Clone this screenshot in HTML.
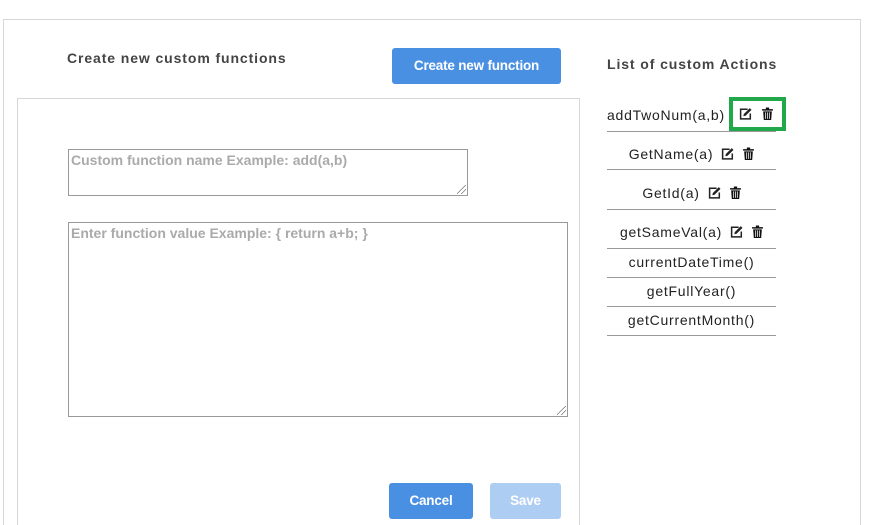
<!DOCTYPE html>
<html><head><meta charset="utf-8"><style>
*{box-sizing:border-box;margin:0;padding:0}
html,body{width:875px;height:525px;overflow:hidden}
body{background:#fff;position:relative;font-family:"Liberation Sans",Arial,sans-serif}
.a{position:absolute}
.h{font-size:14px;font-weight:bold;color:#444;letter-spacing:0.9px}
.btn{background:#4a90e2;color:#fff;font-weight:bold;font-size:13.5px;border-radius:3px;text-align:center;letter-spacing:-0.2px}
.ta{border:1px solid #999;color:#aaa;font-weight:bold;font-size:14px;padding:2px 2px}
.row{position:absolute;left:607px;width:169px;border-bottom:1px solid #999;font-size:14px;color:#222;letter-spacing:0.75px;text-align:center;white-space:nowrap}
.ic{display:inline-block;vertical-align:middle;margin-left:8px;position:relative;top:-2px}
.grip{position:absolute;right:1px;bottom:1px;width:9px;height:9px;background:linear-gradient(135deg,transparent 45%,#777 45%,#777 52%,transparent 52%,transparent 70%,#777 70%,#777 77%,transparent 77%)}
</style></head><body>
<div class="a" style="left:3px;top:19px;width:858px;height:506px;border:1px solid #d6d6d6;border-bottom:none"></div>
<div class="a" style="left:17px;top:98px;width:563px;height:427px;border:1px solid #d6d6d6;border-bottom:none"></div>
<div class="a h" style="left:67px;top:50px">Create new custom functions</div>
<div class="a btn" style="left:392px;top:48px;width:169px;height:36px;line-height:36px">Create new function</div>
<div class="a ta" style="left:68px;top:149px;width:400px;height:47px">Custom function name Example: add(a,b)<span class="grip"></span></div>
<div class="a ta" style="left:68px;top:222px;width:500px;height:195px">Enter function value Example: { return a+b; }<span class="grip"></span></div>
<div class="a btn" style="left:389px;top:483px;width:84px;height:36px;line-height:36px">Cancel</div>
<div class="a btn" style="left:490px;top:483px;width:71px;height:36px;line-height:36px;background:#aecdf3">Save</div>
<div class="a h" style="left:607px;top:56px">List of custom Actions</div>

<div class="row" style="top:103px;height:29px;text-align:left;line-height:24px">addTwoNum(a,b)</div>
<div class="a" style="left:729px;top:97px;width:57px;height:34px;border:4px solid #22a84a;background:#fff"></div>
<div class="row" style="top:143px;height:27px;line-height:22px">GetName(a)<svg class="ic" width="14" height="13" viewBox="0 0 13 12"><path d="M8 2H1.5v9h9V6" fill="none" stroke="#222" stroke-width="1.4"/><path d="M4 8.5l.5-2L10 1l1.6 1.6-5.5 5.5z" fill="#222"/></svg><svg class="ic" width="11" height="13" viewBox="0 0 10 12"><path d="M0 2h10v1.3H0zM3.5 0.5h3v1.5h-3zM1 4h8l-.6 8H1.6z" fill="#111"/><path d="M3.3 5v6M5 5v6M6.7 5v6" stroke="#fff" stroke-width=".7"/></svg></div>
<div class="row" style="top:182px;height:28px;line-height:22px">GetId(a)<svg class="ic" width="14" height="13" viewBox="0 0 13 12"><path d="M8 2H1.5v9h9V6" fill="none" stroke="#222" stroke-width="1.4"/><path d="M4 8.5l.5-2L10 1l1.6 1.6-5.5 5.5z" fill="#222"/></svg><svg class="ic" width="11" height="13" viewBox="0 0 10 12"><path d="M0 2h10v1.3H0zM3.5 0.5h3v1.5h-3zM1 4h8l-.6 8H1.6z" fill="#111"/><path d="M3.3 5v6M5 5v6M6.7 5v6" stroke="#fff" stroke-width=".7"/></svg></div>
<div class="row" style="top:221px;height:28px;line-height:22px">getSameVal(a)<svg class="ic" width="14" height="13" viewBox="0 0 13 12"><path d="M8 2H1.5v9h9V6" fill="none" stroke="#222" stroke-width="1.4"/><path d="M4 8.5l.5-2L10 1l1.6 1.6-5.5 5.5z" fill="#222"/></svg><svg class="ic" width="11" height="13" viewBox="0 0 10 12"><path d="M0 2h10v1.3H0zM3.5 0.5h3v1.5h-3zM1 4h8l-.6 8H1.6z" fill="#111"/><path d="M3.3 5v6M5 5v6M6.7 5v6" stroke="#fff" stroke-width=".7"/></svg></div>
<div class="row" style="top:249px;height:29px;line-height:26px">currentDateTime()</div>
<div class="row" style="top:278px;height:29px;line-height:26px">getFullYear()</div>
<div class="row" style="top:307px;height:29px;line-height:26px">getCurrentMonth()</div>

<svg class="a" style="left:739px;top:107px" width="14" height="13" viewBox="0 0 13 12"><path d="M8 2H1.5v9h9V6" fill="none" stroke="#222" stroke-width="1.4"/><path d="M4 8.5l.5-2L10 1l1.6 1.6-5.5 5.5z" fill="#222"/></svg>
<svg class="a" style="left:762px;top:107px" width="11" height="13" viewBox="0 0 10 12"><path d="M0 2h10v1.3H0zM3.5 0.5h3v1.5h-3zM1 4h8l-.6 8H1.6z" fill="#111"/><path d="M3.3 5v6M5 5v6M6.7 5v6" stroke="#fff" stroke-width=".7"/></svg>
</body></html>
